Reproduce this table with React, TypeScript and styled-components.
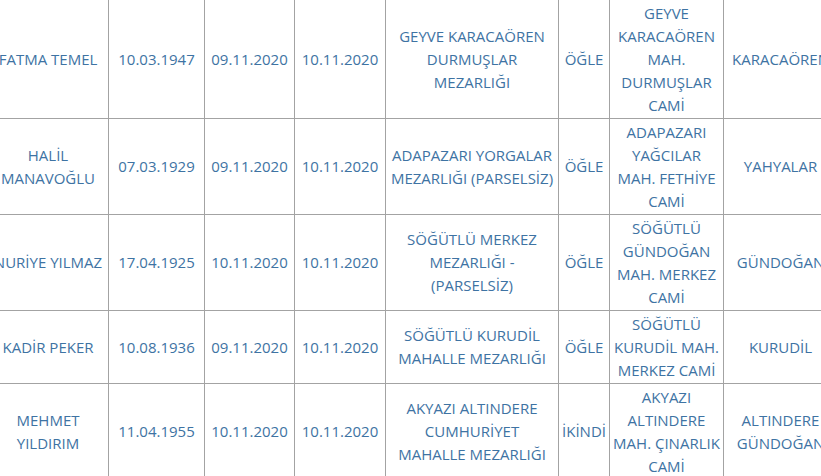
import React from 'react';
import styled, { createGlobalStyle } from 'styled-components';

const GlobalStyle = createGlobalStyle`
  html, body {
    margin: 0;
    padding: 0;
    background: #fff;
    overflow: hidden;
  }
`;

const Viewport = styled.section`
  width: 821px;
  height: 476px;
  overflow: hidden;
  background-color: #fff;
`;

const Table = styled.table`
  margin-left: -13px;
  margin-top: -1px;
  border-collapse: collapse;
  table-layout: fixed;
  width: 850px;
  font-family: 'Open Sans', 'Liberation Sans', sans-serif;
  font-size: 15px;
  line-height: 23px;
  color: #3e73a3;
`;

const Cell = styled.td`
  border: 1px solid #a3a3a3;
  padding: 1.5px 2px;
  text-align: center;
  vertical-align: middle;
  white-space: nowrap;
`;

type Row = string[][];

const COLUMNS = [121, 96, 90, 91, 173, 51, 114, 114];

const ROWS: Row[] = [
  [
    ['FATMA TEMEL'],
    ['10.03.1947'],
    ['09.11.2020'],
    ['10.11.2020'],
    ['GEYVE KARACAÖREN', 'DURMUŞLAR', 'MEZARLIĞI'],
    ['ÖĞLE'],
    ['GEYVE', 'KARACAÖREN', 'MAH.', 'DURMUŞLAR', 'CAMİ'],
    ['KARACAÖREN'],
  ],
  [
    ['HALİL', 'MANAVOĞLU'],
    ['07.03.1929'],
    ['09.11.2020'],
    ['10.11.2020'],
    ['ADAPAZARI YORGALAR', 'MEZARLIĞI (PARSELSİZ)'],
    ['ÖĞLE'],
    ['ADAPAZARI', 'YAĞCILAR', 'MAH. FETHİYE', 'CAMİ'],
    ['YAHYALAR'],
  ],
  [
    ['NURİYE YILMAZ'],
    ['17.04.1925'],
    ['10.11.2020'],
    ['10.11.2020'],
    ['SÖĞÜTLÜ MERKEZ', 'MEZARLIĞI -', '(PARSELSİZ)'],
    ['ÖĞLE'],
    ['SÖĞÜTLÜ', 'GÜNDOĞAN', 'MAH. MERKEZ', 'CAMİ'],
    ['GÜNDOĞAN'],
  ],
  [
    ['KADİR PEKER'],
    ['10.08.1936'],
    ['09.11.2020'],
    ['10.11.2020'],
    ['SÖĞÜTLÜ KURUDİL', 'MAHALLE MEZARLIĞI'],
    ['ÖĞLE'],
    ['SÖĞÜTLÜ', 'KURUDİL MAH.', 'MERKEZ CAMİ'],
    ['KURUDİL'],
  ],
  [
    ['MEHMET', 'YILDIRIM'],
    ['11.04.1955'],
    ['10.11.2020'],
    ['10.11.2020'],
    ['AKYAZI ALTINDERE', 'CUMHURİYET', 'MAHALLE MEZARLIĞI'],
    ['İKİNDİ'],
    ['AKYAZI', 'ALTINDERE', 'MAH. ÇINARLIK', 'CAMİ'],
    ['ALTINDERE', 'GÜNDOĞAN'],
  ],
];

const Lines: React.FC<{ lines: string[] }> = ({ lines }) => (
  <>
    {lines.map((line, i) => (
      <React.Fragment key={i}>
        {i > 0 && <br />}
        {line}
      </React.Fragment>
    ))}
  </>
);

const App: React.FC = () => {
  return (
    <Viewport>
      <GlobalStyle />
      <Table>
        <colgroup>
          {COLUMNS.map((w, i) => (
            <col key={i} style={{ width: w }} />
          ))}
        </colgroup>
        <tbody>
          {ROWS.map((row, r) => (
            <tr key={r}>
              {row.map((cell, c) => (
                <Cell key={c}>
                  <Lines lines={cell} />
                </Cell>
              ))}
            </tr>
          ))}
        </tbody>
      </Table>
    </Viewport>
  );
};

export default App;
